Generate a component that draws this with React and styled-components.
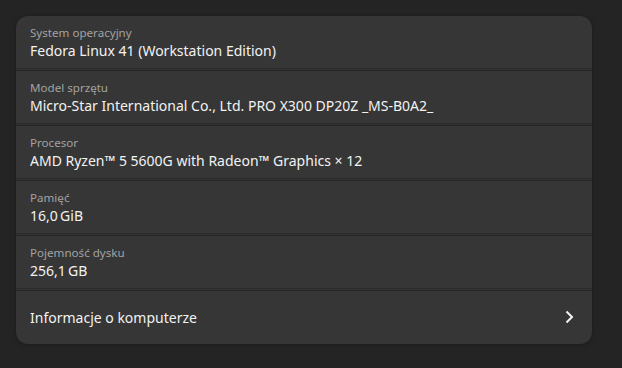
import React from 'react';
import styled, { createGlobalStyle } from 'styled-components';

const GlobalStyle = createGlobalStyle`
  html, body {
    margin: 0;
    padding: 0;
    background: #242424;
  }
  body {
    font-family: "Noto Sans", "DejaVu Sans", sans-serif;
    -webkit-font-smoothing: antialiased;
  }
`;

const Page = styled.div`
  width: 622px;
  height: 368px;
  box-sizing: border-box;
  padding: 16px 30px 0 16px;
  background: #242424;
`;

const Card = styled.div`
  width: 576px;
  background: #363636;
  border-radius: 12px;
  overflow: hidden;
  box-shadow: 0 0 0 1px rgba(0, 0, 0, 0.03), 0 1px 3px 1px rgba(0, 0, 0, 0.07),
    0 2px 6px 2px rgba(0, 0, 0, 0.03);
`;

const Row = styled.div`
  box-sizing: border-box;
  padding: 0 14px;
  display: flex;
  flex-direction: column;
  justify-content: center;
  height: ${p => (p.last ? '53px' : '55px')};
  border-bottom: ${p => (p.last ? 'none' : '1px solid #262626')};
  box-shadow: ${p => (p.last ? 'none' : 'inset 0 -1px 0 #323232, inset 0 -2px 0 #2b2b2b')};
`;

const Caption = styled.div`
  font-size: 11.6px;
  line-height: 16px;
  color: #a2a2a2;
`;

const Value = styled.div`
  font-size: 14px;
  line-height: 20px;
  color: #f2f2f2;
`;

const ActionRow = styled(Row)`
  flex-direction: row;
  align-items: center;
  justify-content: space-between;
  padding-bottom: 1px;
  cursor: pointer;
`;

const Label = styled.span`
  font-size: 14px;
  color: #f2f2f2;
`;

const Chevron = () => (
  <svg width="16" height="16" viewBox="0 0 16 16" style={{ marginRight: 1 }}>
    <path d="M5.5 2.5 L11 8 L5.5 13.5" fill="none" stroke="#f4f4f4" strokeWidth="2" />
  </svg>
);

const info = [
  { title: 'System operacyjny', value: 'Fedora Linux 41 (Workstation Edition)' },
  { title: 'Model sprzętu', value: 'Micro-Star International Co., Ltd. PRO X300 DP20Z _MS-B0A2_' },
  { title: 'Procesor', value: 'AMD Ryzen™ 5 5600G with Radeon™ Graphics × 12' },
  { title: 'Pamięć', value: '16,0\u2009GiB' },
  { title: 'Pojemność dysku', value: '256,1\u2009GB' },
];

export default function App() {
  return (
    <Page>
      <GlobalStyle />
      <Card>
        {info.map(item => (
          <Row key={item.title}>
            <Caption>{item.title}</Caption>
            <Value>{item.value}</Value>
          </Row>
        ))}
        <ActionRow last>
          <Label>Informacje o komputerze</Label>
          <Chevron />
        </ActionRow>
      </Card>
    </Page>
  );
}
